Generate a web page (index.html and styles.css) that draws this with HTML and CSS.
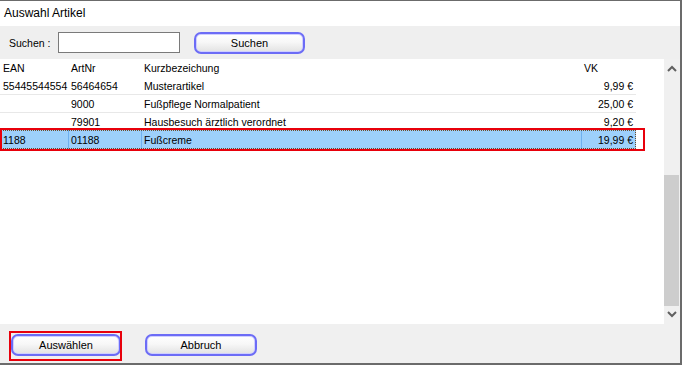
FILE: index.html
```html
<!DOCTYPE html>
<html lang="de">
<head>
<meta charset="utf-8">
<title>Auswahl Artikel</title>
<link rel="stylesheet" href="styles.css">
</head>
<body>
<div class="window">
  <div class="titlebar">Auswahl Artikel</div>
  <div class="searchbar">
    <span class="label">Suchen :</span>
    <span class="input"></span>
    <span class="btn btn-search">Suchen</span>
  </div>
  <div class="listwrap">
    <div class="list">
      <div class="row head">
        <span class="c ean">EAN</span><span class="c nr">ArtNr</span><span class="c kb">Kurzbezeichung</span><span class="c vk vkh">VK</span>
      </div>
      <div class="row line">
        <span class="c ean">55445544554</span><span class="c nr">56464654</span><span class="c kb">Musterartikel</span><span class="c vk">9,99 €</span>
      </div>
      <div class="row line">
        <span class="c ean"></span><span class="c nr">9000</span><span class="c kb">Fußpflege Normalpatient</span><span class="c vk">25,00 €</span>
      </div>
      <div class="row">
        <span class="c ean"></span><span class="c nr">79901</span><span class="c kb">Hausbesuch ärztlich verordnet</span><span class="c vk">9,20 €</span>
      </div>
      <div class="row sel">
        <span class="c ean">1188</span><span class="c nr">01188</span><span class="c kb">Fußcreme</span><span class="c vk">19,99 €</span>
      </div>
    </div>
    <div class="scrollbar">
      <svg class="arrow" width="16" height="16" viewBox="0 0 16 16"><path d="M4 10 L8 6 L12 10" fill="none" stroke="#606060" stroke-width="2"/></svg>
      <div class="track"><div class="thumb"></div></div>
      <svg class="arrow" width="16" height="16" viewBox="0 0 16 16"><path d="M4 6 L8 10 L12 6" fill="none" stroke="#606060" stroke-width="2"/></svg>
    </div>
  </div>
  <div class="footer">
    <span class="btn btn-ok">Auswählen</span>
    <span class="btn btn-cancel">Abbruch</span>
  </div>
</div>
</body>
</html>
```
FILE: styles.css
```css
*, *::before, *::after { box-sizing: border-box; }
html, body { margin: 0; padding: 0; background: #efefef; }
body { font-family: "Liberation Sans", Arial, sans-serif; font-size: 10.5px; color: #000; }

.window {
  width: 682px;
  height: 365px;
  border-top: 1px solid #6b6b6b;
  border-right: 2px solid #6b6b6b;
  border-bottom: 2px solid #6b6b6b;
  display: flex;
  flex-direction: column;
  background: #f0f0f0;
}

.titlebar {
  height: 25px;
  background: #fff;
  font-size: 12px;
  padding: 5px 0 0 4px;
  color: #000;
}

.searchbar {
  height: 33px;
  background: #efefef;
  display: flex;
  align-items: center;
  padding-left: 9px;
}
.label { width: 49px; }
.input {
  width: 122px;
  height: 21px;
  border: 1px solid #7a7a7a;
  background: #fff;
  margin-right: 14px;
}

.btn {
  display: flex;
  align-items: center;
  justify-content: center;
  width: 111px;
  height: 22px;
  border: 2px solid #6c6cf6;
  border-radius: 7px;
  background: linear-gradient(#ffffff 0%, #f7f7f7 45%, #e2e2e2 100%);
  font-size: 11px;
  color: #000;
  box-shadow: inset 0 0 0 1px #cfcfff;
}

.listwrap {
  height: 265px;
  display: flex;
}
.list {
  flex: 1;
  background: #fff;
}
.row {
  display: flex;
  width: 636px;
  height: 18px;
  align-items: center;
  position: relative;
}
.row.line { border-bottom: 1px solid #e8e8e8; }
.c { padding-left: 3px; white-space: nowrap; }
.ean { width: 68px; }
.nr { width: 73px; }
.kb { width: 440px; }
.vk { width: 55px; text-align: right; padding-right: 3px; }
.vkh { text-align: left; padding-left: 3px; }

.row.sel {
  background: #9dd0fb;
  height: 19px;
  margin-top: -1px;
  outline: 1px dotted #6b4b2b;
  outline-offset: -1px;
}
.row.sel .c { height: 100%; display: flex; align-items: center; }
.row.sel .vk { justify-content: flex-end; }
.row.sel .nr, .row.sel .kb, .row.sel .vk { border-left: 1px solid #6fb0ee; padding-left: 2px; }
.row.sel .vk { padding-left: 0; }
.row.sel::after {
  content: "";
  position: absolute;
  left: 0;
  top: -2px;
  width: 645px;
  height: 23px;
  border: 2px solid #e8000b;
}

.scrollbar {
  width: 16px;
  background: #f0f0f0;
  display: flex;
  flex-direction: column;
}
.arrow { display: block; margin-top: 2px; }
.scrollbar .arrow:last-child { margin-top: 0; margin-bottom: 2px; }
.track { flex: 1; display: flex; flex-direction: column; justify-content: flex-end; }
.thumb { height: 131px; background: #cdcdcd; margin-right: 1px; }

.footer {
  flex: 1;
  background: #f0f0f0;
  display: flex;
  align-items: center;
  padding-left: 11px;
  padding-top: 3px;
  gap: 24px;
}
.btn-ok { width: 110px; height: 22px; position: relative; }
.btn-ok::after {
  content: "";
  position: absolute;
  left: -4px;
  top: -5px;
  width: 113px;
  height: 30px;
  border: 2px solid #e8000b;
}
.btn-cancel { width: 112px; height: 22px; }
```
